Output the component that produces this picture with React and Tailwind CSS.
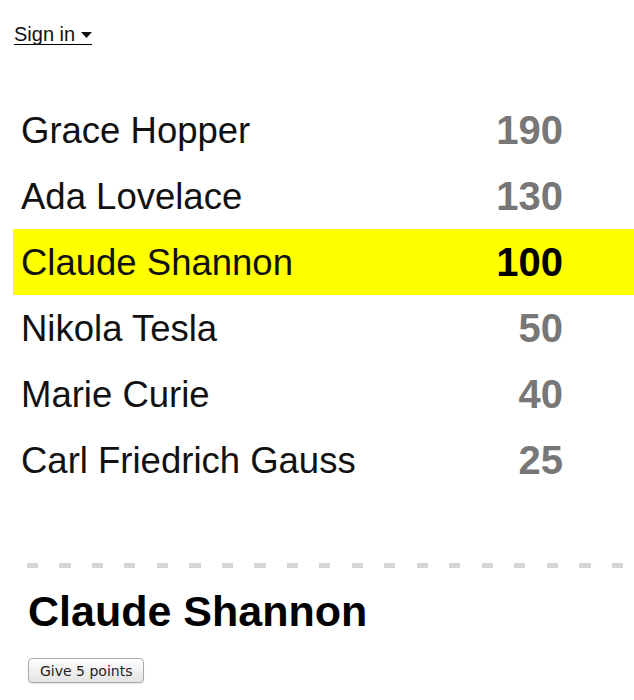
import { useState } from "react";

const players = [
  { name: "Grace Hopper", score: 190 },
  { name: "Ada Lovelace", score: 130 },
  { name: "Claude Shannon", score: 100 },
  { name: "Nikola Tesla", score: 50 },
  { name: "Marie Curie", score: 40 },
  { name: "Carl Friedrich Gauss", score: 25 },
];

const App = () => {
  const [selected, setSelected] = useState("Claude Shannon");

  return (
    <div className="min-h-screen bg-white font-['Liberation_Sans',Arial,sans-serif] text-black">
      {/* sign in */}
      <div className="pl-[14px] pt-[24px]">
        <a
          href="#"
          className="inline-flex items-center border-b border-black text-[20px] leading-none text-[#111]"
        >
          Sign in
          <svg className="ml-[6px] mt-[2px]" width="11" height="6" viewBox="0 0 11 6">
            <path d="M0 0h11L5.5 6z" fill="#111" />
          </svg>
        </a>
      </div>

      {/* leaderboard */}
      <div className="ml-[13px] mt-[49px]">
        {players.map((p) => {
          const isSelected = p.name === selected;
          return (
            <div
              key={p.name}
              onClick={() => setSelected(p.name)}
              className={
                "flex h-[66px] items-center pl-[8px] pr-[71px] " +
                (isSelected ? "bg-[#ffff00]" : "")
              }
            >
              <span className="mt-[2px] flex-1 text-[36.5px] font-light leading-none text-[#111]">
                {p.name}
              </span>
              <span
                className={
                  "text-[40px] font-bold leading-none " +
                  (isSelected ? "text-black" : "text-[#777]")
                }
              >
                {p.score}
              </span>
            </div>
          );
        })}
      </div>

      {/* dashed divider */}
      <div className="ml-[27px] mt-[70px] h-[5px] bg-[repeating-linear-gradient(90deg,#d6d6d6_0px,#d6d6d6_11px,transparent_11px,transparent_32.5px)]" />

      {/* details */}
      <div className="pl-[28px]">
        <h2 className="mt-[22px] text-[43px] font-bold leading-none">{selected}</h2>
        <button className="mt-[25px] h-[25px] rounded-[4px] border border-[#aaa] bg-gradient-to-b from-white to-[#e2e2e2] px-[11px] font-['DejaVu_Sans',sans-serif] text-[14px] leading-none text-[#222] shadow-[0_1px_1px_rgba(0,0,0,0.1)]">
          Give 5 points
        </button>
      </div>
    </div>
  );
};

export default App;
